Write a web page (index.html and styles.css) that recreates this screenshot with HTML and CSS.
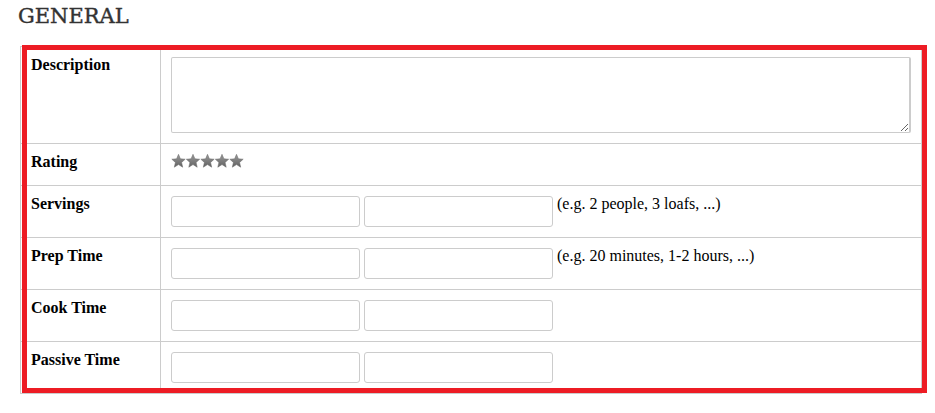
FILE: index.html
```html
<!DOCTYPE html>
<html lang="en">
<head>
    <meta charset="UTF-8">
    <title>General</title>
    <link rel="stylesheet" href="styles.css">
</head>
<body>
    <h2 class="section-title">GENERAL</h2>

    <div class="general-wrap">
        <table class="general-table">
            <tr class="row-desc">
                <th>Description</th>
                <td><textarea class="desc-input"></textarea></td>
            </tr>
            <tr class="row-rating">
                <th>Rating</th>
                <td>
                    <svg class="stars" width="74" height="14" viewBox="0 0 74 14">
                        <defs>
                            <linearGradient id="star-grad" x1="0" y1="0" x2="0" y2="1">
                                <stop offset="0" stop-color="#9a9a9a"/>
                                <stop offset="1" stop-color="#626262"/>
                            </linearGradient>
                            <path id="star" d="M7 0.3 L8.9 4.8 L13.7 5.2 L10.1 8.4 L11.2 13.2 L7 10.6 L2.8 13.2 L3.9 8.4 L0.3 5.2 L5.1 4.8 Z" fill="url(#star-grad)" stroke="#6a6a6a" stroke-width="0.5"/>
                        </defs>
                        <use href="#star" x="0.5"/>
                        <use href="#star" x="15"/>
                        <use href="#star" x="29.5"/>
                        <use href="#star" x="44"/>
                        <use href="#star" x="58.5"/>
                    </svg>
                </td>
            </tr>
            <tr>
                <th>Servings</th>
                <td>
                    <div class="field-line">
                        <input type="text" class="small-input">
                        <input type="text" class="small-input">
                        <span class="hint">(e.g. 2 people, 3 loafs, ...)</span>
                    </div>
                </td>
            </tr>
            <tr>
                <th>Prep Time</th>
                <td>
                    <div class="field-line">
                        <input type="text" class="small-input">
                        <input type="text" class="small-input">
                        <span class="hint">(e.g. 20 minutes, 1-2 hours, ...)</span>
                    </div>
                </td>
            </tr>
            <tr>
                <th>Cook Time</th>
                <td>
                    <div class="field-line">
                        <input type="text" class="small-input">
                        <input type="text" class="small-input">
                    </div>
                </td>
            </tr>
            <tr>
                <th>Passive Time</th>
                <td>
                    <div class="field-line">
                        <input type="text" class="small-input">
                        <input type="text" class="small-input">
                    </div>
                </td>
            </tr>
        </table>

        <!-- highlight box drawn over the table -->
        <div class="highlight"></div>
    </div>
</body>
</html>
```

FILE: styles.css
```css
* {
    box-sizing: border-box;
}

body {
    margin: 0;
    background: #fff;
    font-family: "Liberation Serif", "Times New Roman", serif;
    color: #000;
}

.section-title {
    margin: 0;
    padding: 4px 0 0 18px;
    height: 46px;
    font-family: "DejaVu Serif", serif;
    font-weight: normal;
    font-size: 21px;
    line-height: 24px;
    color: #333;
    -webkit-text-stroke: 0.4px #333;
}

.general-wrap {
    position: relative;
    margin-left: 20px;
    width: 902px;
}

.general-table {
    width: 902px;
    border-collapse: collapse;
    border: 1px solid #ccc;
}

.general-table th,
.general-table td {
    border: 1px solid #ccc;
    padding: 10px;
    vertical-align: top;
    text-align: left;
}

.general-table th {
    width: 140px;
    font-size: 16px;
    line-height: 18px;
    font-weight: bold;
    padding-top: 9px;
}

.desc-input {
    display: block;
    width: 100%;
    height: 76px;
    margin: 0;
    border: 1px solid #ccc;
    border-right-width: 2px;
    border-radius: 2px;
    resize: vertical;
    font-family: inherit;
}

.row-rating td {
    padding-top: 10px;
    height: 42px;
}

.stars {
    display: block;
}

.field-line {
    display: flex;
    align-items: flex-start;
    gap: 4px;
}

.small-input {
    width: 189px;
    height: 31px;
    margin: 0;
    border: 1px solid #ccc;
    border-radius: 3px;
    padding: 4px 6px;
    font-family: inherit;
}

.hint {
    font-size: 16px;
    line-height: 18px;
    margin-top: -1px;
}

.highlight {
    position: absolute;
    left: 2px;
    top: -1px;
    width: 905px;
    height: 348px;
    border: 5px solid #ed1c24;
    pointer-events: none;
}
```
